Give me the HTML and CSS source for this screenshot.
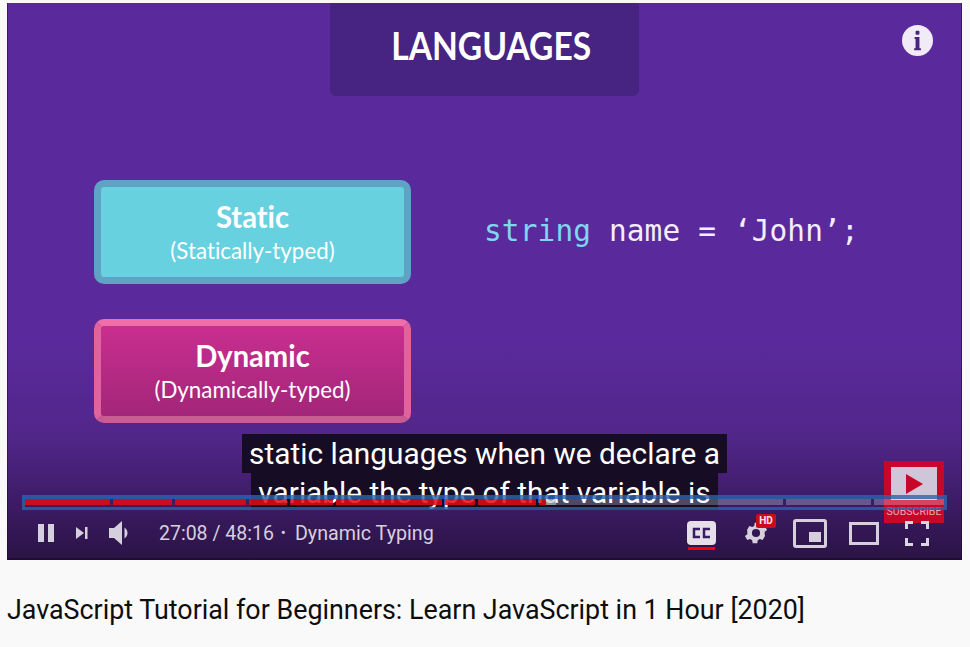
FILE: index.html
```html
<!doctype html>
<html>
<head>
<meta charset="utf-8">
<title>JavaScript Tutorial for Beginners</title>
<link rel="stylesheet" href="styles.css">
</head>

<body>
	<div class="player">
		<div class="slide">
			<div class="tab"><span class="tab-text">LANGUAGES</span></div>
			<div class="slide-body">
				<div class="kinds">
					<div class="kind kind-static">
						<div class="kind-name">Static</div>
						<div class="kind-sub">(Statically-typed)</div>
					</div>
					<div class="kind kind-dynamic">
						<div class="kind-name">Dynamic</div>
						<div class="kind-sub">(Dynamically-typed)</div>
					</div>
				</div>
				<div class="code"><span class="code-type">string</span> name = ‘John’;</div>
			</div>
		</div>

		<!-- info button -->
		<svg class="info" width="31" height="31" viewBox="0 0 32 32">
			<circle cx="16" cy="16" r="16" fill="#f0ebf6"/>
			<rect x="14" y="6" width="4" height="4" rx="1" fill="#4a2480"/>
			<path d="M13 12.500h5V24h1.500v2h-7v-2H14v-9.500h-1z" fill="#4a2480"/>
		</svg>

		<div class="shade"></div>

		<div class="captions">
			<div class="caption-line">static languages when we declare a</div>
			<div class="caption-line">variable the type of that variable is</div>
		</div>

		<div class="watermark">
			<div class="watermark-box">
				<svg width="17" height="20" viewBox="0 0 17 20"><path d="M0 0l17 10L0 20z" fill="#c8062a"/></svg>
			</div>
			<div class="watermark-text">SUBSCRIBE</div>
		</div>

		<div class="progress">
			<div class="seg played" style="flex-grow: 85"></div>
			<div class="seg played" style="flex-grow: 59"></div>
			<div class="seg played" style="flex-grow: 71"></div>
			<div class="seg played" style="flex-grow: 38"></div>
			<div class="seg played" style="flex-grow: 43"></div>
			<div class="seg played" style="flex-grow: 106"></div>
			<div class="seg played" style="flex-grow: 30"></div>
			<div class="seg played" style="flex-grow: 59"></div>
			<div class="seg current" style="flex-grow: 244"></div>
			<div class="seg" style="flex-grow: 85"></div>
			<div class="seg" style="flex-grow: 70"></div>
		</div>

		<div class="controls">
			<div class="controls-left">
				<svg class="icon-pause" width="16" height="20" viewBox="0 0 16 20"><path d="M0 1h6v18H0zM10 1h6v18h-6z" fill="#d6d0de"/></svg>
				<svg class="icon-next" width="12" height="12" viewBox="0 0 12 12"><path d="M0 0l8 6-8 6zM9 0h2.500v12H9z" fill="#d6d0de"/></svg>
				<svg class="icon-volume" width="22" height="26" viewBox="0 0 22 26"><path d="M0 8h5l8-7v24l-8-7H0z" fill="#d6d0de"/><path d="M15.500 7.500c4 3 4 8 0 11z" fill="#d6d0de"/></svg>
				<div class="time">27:08 / 48:16</div>
				<div class="dot">•</div>
				<div class="chapter">Dynamic Typing</div>
			</div>
			<div class="controls-right">
				<div class="cc">
					<svg width="29" height="24" viewBox="0 0 29 24">
						<rect width="29" height="24" rx="4" fill="#e4dfe9"/>
						<path d="M13 8H7v8h6M23 8h-6v8h6" fill="none" stroke="#3a1c62" stroke-width="2.500"/>
					</svg>
					<div class="cc-line"></div>
				</div>
				<div class="gear">
					<svg width="28" height="28" viewBox="0 0 24 24"><path fill="#d6d0de" d="M19.400 13a7.500 7.500 0 0 0 0-2l2.100-1.600-2-3.500-2.500 1a7.500 7.500 0 0 0-1.700-1l-.4-2.600h-4l-.4 2.600a7.500 7.500 0 0 0-1.700 1l-2.500-1-2 3.500L4.600 11a7.500 7.500 0 0 0 0 2l-2.100 1.600 2 3.500 2.500-1a7.500 7.500 0 0 0 1.700 1l.4 2.600h4l.4-2.600a7.500 7.500 0 0 0 1.700-1l2.500 1 2-3.500zM12 15.500a3.500 3.500 0 1 1 0-7 3.500 3.500 0 0 1 0 7z"/></svg>
					<div class="hd">HD</div>
				</div>
				<div class="mini"><div class="mini-inner"></div></div>
				<div class="theater"></div>
				<svg class="fullscreen" width="24" height="25" viewBox="0 0 24 25"><path d="M1.500 8V1.500H8M16 1.500h6.500V8M22.500 17v6.500H16M8 23.500H1.500V17" fill="none" stroke="#dcd6e3" stroke-width="3"/></svg>
			</div>
		</div>
	</div>

	<h1 class="video-title">JavaScript Tutorial for Beginners: Learn JavaScript in 1 Hour [2020]</h1>
</body>
</html>
```

FILE: styles.css
```css
html, body {margin: 0; padding: 0;}
body {width: 970px; height: 647px; overflow: hidden; background-color: #f9f9f9; box-sizing: border-box; padding: 3px 8px 0 7px; font-family: Roboto, "Liberation Sans", sans-serif;}

.player {position: relative; height: 557px; background: linear-gradient(to bottom, #5a2a9c 0%, #5a2a9c 61%, #512689 78%, #3e1c68 89%, #2a1344 100%); box-shadow: inset 1px 0 0 rgba(20, 10, 40, 0.5), inset -1px 0 0 rgba(20, 10, 40, 0.5); overflow: hidden;}

/* slide */
.slide {display: flex; flex-direction: column; align-items: center; color: #ffffff; font-family: Lato, "Open Sans", sans-serif; font-variant-ligatures: none;}
.tab {width: 309px; height: 93px; box-sizing: border-box; padding: 16px 0 0 14px; background-color: #472382; border-radius: 0 0 6px 6px; text-align: center; font-size: 39px; line-height: 52px; font-weight: 700;}
.tab-text {display: inline-block; transform: scaleX(0.86);}
.slide-body {align-self: stretch; display: flex; padding: 84px 0 0 87px;}
.kinds {display: flex; flex-direction: column; gap: 35px;}
.kind {width: 317px; height: 104px; box-sizing: border-box; border: 7px solid; border-radius: 10px; text-align: center; padding-top: 11px;}
.kind-static {background-color: #68d1df; border-color: #5fa3c4;}
.kind-dynamic {background: linear-gradient(to bottom, #c92e8e, #a2267a); border-color: #ef6da9 #e0639e #c95b92;}
.kind-name {font-size: 31px; line-height: 36px; font-weight: 700; transform: scaleX(0.94);}
.kind-sub {font-size: 23.500px; line-height: 32px; transform: scaleX(0.95);}

.code {margin: 31px 0 0 73px; font-family: "DejaVu Sans Mono", monospace; font-size: 29.400px; letter-spacing: 0.15px; line-height: 40px; white-space: pre; color: #f4eefa;}
.code-type {color: #80d6f0;}

.info {position: absolute; top: 22px; left: 895px;}
.shade {position: absolute; left: 0; right: 0; bottom: 0; height: 2px; background-color: #1e0e33;}

/* captions, cut off by the progress bar */
.captions {position: absolute; top: 431px; left: 0; right: 0; height: 76px; overflow: hidden; display: flex; flex-direction: column; align-items: center; font-size: 29.800px; color: #ffffff;}
.caption-line {height: 38.500px; line-height: 39px; padding: 0 7px; background-color: #160d25; white-space: nowrap; flex-shrink: 0;}

.watermark {position: absolute; top: 458px; left: 877px; width: 60px; height: 62px; box-sizing: border-box; padding-top: 6px; background-color: #c8062a; display: flex; flex-direction: column; align-items: center;}
.watermark-box {width: 46px; height: 33px; margin-bottom: 1px; background-color: #cfc6da; display: flex; align-items: center; justify-content: center;}
.watermark-text {font-size: 10.600px; line-height: 22px; color: #e8a6b6; white-space: nowrap;}

.progress {position: absolute; top: 492px; left: 15px; width: 925px; height: 15px; box-sizing: border-box; border: 3px solid rgba(42, 100, 172, 0.8); border-top-width: 4px; padding-bottom: 2px; display: flex; gap: 3px;}
.seg {flex-basis: 0; background-color: rgba(255, 255, 255, 0.25);}
.played {background-color: rgba(227, 10, 23, 0.85);}
.current {background: linear-gradient(to right, rgba(227, 10, 23, 0.85) 3%, rgba(200, 200, 200, 0.7) 3%, rgba(200, 200, 200, 0.7) 7%, rgba(255, 255, 255, 0.25) 7%);}

/* control bar */
.controls {position: absolute; left: 0; right: 0; top: 510px; height: 40px; display: flex; justify-content: space-between; align-items: center; color: #d6d0de; font-size: 19.500px;}
.controls-left {display: flex; align-items: center; padding-left: 31px;}
.icon-next {margin-left: 22px;}
.icon-volume {margin-left: 21px;}
.time {margin-left: 28px;}
.dot {margin-left: 7px; font-size: 15px;}
.chapter {margin-left: 9px; font-size: 19.700px;}
.controls-right {display: flex; align-items: center; padding-right: 33px;}
.cc {position: relative; display: flex; margin-right: 26px;}
.cc-line {position: absolute; top: 26px; left: 1px; width: 27px; height: 3px; background-color: #f00000;}
.gear {position: relative; display: flex; margin-right: 23px;}
.hd {position: absolute; top: -5px; left: 14px; width: 20px; height: 14px; background-color: #cc0a1e; border-radius: 2px; color: #f3e8ee; font-size: 10px; font-weight: 700; line-height: 14px; text-align: center;}
.mini {width: 34px; height: 29px; box-sizing: border-box; border: 3px solid #d6d0de; border-radius: 3px; padding: 10px 3px 3px 13px;}
.mini-inner {height: 100%; background-color: #d6d0de;}
.theater {width: 30px; height: 23px; box-sizing: border-box; border: 3px solid #d6d0de; margin-left: 22px;}
.fullscreen {margin-left: 26px;}

.video-title {margin: 34px 0 0; font-size: 26.850px; line-height: 32px; font-weight: 400; color: #0d0d0d; white-space: nowrap;}
```
